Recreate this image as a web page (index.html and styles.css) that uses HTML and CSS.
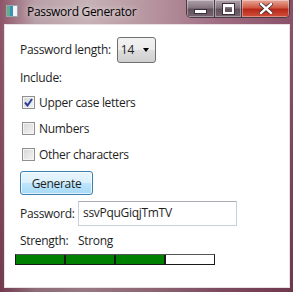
FILE: index.html
```html
<!DOCTYPE html>
<html lang="en">
<head>
  <meta charset="UTF-8">
  <title>Password Generator</title>
  <link rel="stylesheet" href="styles.css">
</head>
<body>
  <div class="window">
    <div class="titlebar">
      <svg class="app-icon" width="12" height="12" viewBox="0 0 12 12">
        <rect x="0.5" y="0.5" width="11" height="11" fill="#f4f4f4" stroke="#9aa4ad"/>
        <rect x="1" y="1" width="6" height="10" fill="#3d8fb8"/>
        <rect x="1" y="1" width="3" height="10" fill="#5fb08a"/>
      </svg>
      <span class="title">Password Generator</span>
      <div class="caption-buttons">
        <div class="cap-btn minimize"><span class="glyph-min"></span></div>
        <div class="cap-btn maximize"><span class="glyph-max"></span></div>
        <div class="cap-btn close">
          <svg width="14" height="11" viewBox="0 0 14 11">
            <path d="M2 1 L12 10 M12 1 L2 10" stroke="#3a2a2a" stroke-width="4" stroke-linecap="square"/>
            <path d="M2 1 L12 10 M12 1 L2 10" stroke="#fff" stroke-width="2.4" stroke-linecap="square"/>
          </svg>
        </div>
      </div>
    </div>

    <main class="client">
      <div class="row length-row">
        <label>Password length:</label>
        <div class="combo">
          <span>14</span>
          <span class="arrow"></span>
        </div>
      </div>

      <div class="row include-row">Include:</div>

      <div class="row check-row">
        <span class="checkbox">
          <svg width="9" height="9" viewBox="0 0 9 9">
            <path d="M1 4.5 L3.5 7.5 L8 1" fill="none" stroke="#2b3f9a" stroke-width="2"/>
          </svg>
        </span>
        <span>Upper case letters</span>
      </div>
      <div class="row check-row">
        <span class="checkbox"></span>
        <span>Numbers</span>
      </div>
      <div class="row check-row">
        <span class="checkbox"></span>
        <span>Other characters</span>
      </div>

      <button class="generate" type="button">Generate</button>

      <div class="row password-row">
        <label>Password:</label>
        <div class="textbox">ssvPquGiqjTmTV</div>
      </div>

      <div class="row strength-row">
        <span class="strength-label">Strength:</span>
        <span>Strong</span>
      </div>

      <div class="meter">
        <div class="seg on"></div>
        <div class="seg on"></div>
        <div class="seg on"></div>
        <div class="seg"></div>
      </div>
    </main>
  </div>
</body>
</html>
```

FILE: styles.css
```css
/* Window frame */
body {
  margin: 0;
  background: #6e2a44;
}
.window {
  width: 293px;
  height: 292px;
  display: flex;
  flex-direction: column;
  background:
    linear-gradient(to bottom, rgba(255,255,255,0) 20px, rgba(60,10,30,0.35) 100%),
    linear-gradient(to right, #8e5468 0%, #b9a0a8 12%, #c6b2b7 30%, #b48f9b 55%, #9e6c80 75%, #8a5068 100%);
  font-family: "Open Sans", "Noto Sans", sans-serif;
  font-size: 12px;
  letter-spacing: -0.3px;
  color: #1e1e1e;
}

/* Title bar */
.titlebar {
  height: 24px;
  display: flex;
  align-items: flex-start;
}
.app-icon {
  margin: 5px 0 0 6px;
}
.title {
  margin: 3px 0 0 9px;
  font-size: 12px;
  color: #000;
  text-shadow: 0 0 6px rgba(255,255,255,0.8);
}
.caption-buttons {
  margin-left: auto;
  margin-right: 3px;
  display: flex;
  height: 17px;
  border: 1px solid #4a3a44;
  border-top: none;
  border-radius: 0 0 5px 5px;
  overflow: hidden;
}
.cap-btn {
  display: flex;
  align-items: center;
  justify-content: center;
  background: linear-gradient(to bottom, #b0a2a9 0%, #85757f 45%, #62525e 55%, #766470 100%);
  border-left: 1px solid #4a3a44;
  box-shadow: inset 0 0 0 1px rgba(255,255,255,0.35);
}
.cap-btn.minimize {
  width: 27px;
  border-left: none;
}
.cap-btn.maximize {
  width: 26px;
}
.cap-btn.close {
  width: 47px;
  background: linear-gradient(to bottom, #e8a89a 0%, #d05a44 45%, #b8281a 55%, #d2503a 100%);
}
.glyph-min {
  width: 11px;
  height: 3px;
  margin-top: 6px;
  background: #fff;
  border: 1px solid #3a3038;
}
.glyph-max {
  width: 7px;
  height: 5px;
  border: 2px solid #fff;
  border-top-width: 3px;
  outline: 1px solid #3a3038;
}

/* Client area */
.client {
  margin: 0 3px 4px 4px;
  flex: 1;
  background: #fff;
  border: 1px solid #e8e0e4;
  box-sizing: border-box;
  padding: 11px 0 0 15px;
  display: flex;
  flex-direction: column;
  align-items: flex-start;
}
.row {
  display: flex;
  align-items: center;
}
.length-row {
  height: 27px;
}
.length-row label {
  margin-right: 6px;
}
.combo {
  width: 34px;
  height: 24px;
  border: 1px solid #707070;
  border-radius: 3px;
  background: linear-gradient(to bottom, #f2f2f2 0%, #ebebeb 50%, #dddddd 51%, #cfcfcf 100%);
  display: flex;
  align-items: center;
  padding-left: 3px;
  box-sizing: content-box;
}
.combo .arrow {
  margin-left: auto;
  margin-right: 6px;
  width: 0;
  height: 0;
  border-left: 3.5px solid transparent;
  border-right: 3.5px solid transparent;
  border-top: 4px solid #000;
}
.include-row {
  height: 24px;
  margin-top: 2px;
}
.check-row {
  height: 26px;
}
.checkbox {
  width: 11px;
  height: 11px;
  border: 1px solid #8e8f8f;
  background: linear-gradient(135deg, #d6d6d6 0%, #f4f4f4 100%);
  box-shadow: inset 0 0 0 1px #f4f4f4;
  margin: 0 4px 0 2px;
  display: flex;
  align-items: center;
  justify-content: center;
}
.generate {
  margin-top: 4px;
  width: 73px;
  height: 24px;
  font: inherit;
  letter-spacing: inherit;
  color: #1e1e1e;
  border: 1px solid #3c7fb1;
  border-radius: 3px;
  background: linear-gradient(to bottom, #eaf6fd 0%, #d9f0fc 50%, #bee6fd 51%, #a7d9f5 100%);
  box-shadow: inset 0 0 0 1px rgba(255,255,255,0.7);
  padding: 0;
}
.password-row {
  margin-top: 6px;
  height: 25px;
}
.password-row label {
  width: 58px;
}
.textbox {
  width: 159px;
  height: 25px;
  border: 1px solid #c5d1dc;
  border-top-color: #abadb3;
  padding: 0 0 2px 4px;
  display: flex;
  align-items: center;
  box-sizing: border-box;
}
.strength-row {
  height: 28px;
}
.strength-label {
  width: 58px;
}

/* Strength meter */
.meter {
  margin: 0 0 0 -5px;
  display: flex;
  width: 200px;
  height: 11px;
  border: 1px solid #1a1a1a;
  border-top-color: #555;
  box-sizing: border-box;
}
.seg {
  flex: 1;
  background: #fff;
  border-left: 2px solid #1a1a1a;
}
.seg:first-child {
  border-left: none;
}
.seg.on {
  background: #008000;
}
```
